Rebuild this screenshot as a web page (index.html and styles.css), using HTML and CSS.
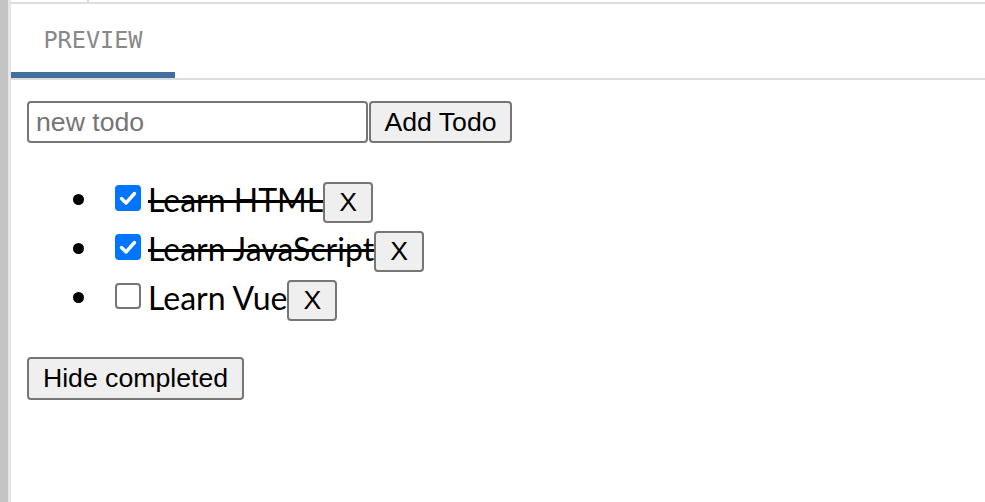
FILE: index.html
```html
<!DOCTYPE html>
<html lang="en">
<head>
<meta charset="utf-8">
<title>Preview</title>
<link rel="stylesheet" href="styles.css">
</head>
<body>
<div class="shell">
  <div class="gutter"></div>
  <div class="edge"></div>
  <main class="pane">
    <div class="topbar"><span class="topdivider"></span></div>
    <nav class="tabs"><div class="tab"><span class="tab-label">PREVIEW</span></div></nav>
    <section class="app">
      <form class="add-row">
        <input class="todo-input" type="text" placeholder="new todo">
        <button class="btn add-btn" type="button">Add Todo</button>
      </form>
      <ul class="todos">
        <li class="todo">
          <span class="check checked"><svg viewBox="0 0 26 26" width="26" height="26"><path d="M6.5 13.5l4.5 4.5 8.5-9.5" fill="none" stroke="#fff" stroke-width="3.4" stroke-linecap="round" stroke-linejoin="round"/></svg></span>
          <span class="label done">Learn HTML</span><button class="btn x-btn" type="button">X</button>
        </li>
        <li class="todo">
          <span class="check checked"><svg viewBox="0 0 26 26" width="26" height="26"><path d="M6.5 13.5l4.5 4.5 8.5-9.5" fill="none" stroke="#fff" stroke-width="3.4" stroke-linecap="round" stroke-linejoin="round"/></svg></span>
          <span class="label done">Learn JavaScript</span><button class="btn x-btn" type="button">X</button>
        </li>
        <li class="todo">
          <span class="check"></span>
          <span class="label">Learn Vue</span><button class="btn x-btn" type="button">X</button>
        </li>
      </ul>
      <button class="btn hide-btn" type="button">Hide completed</button>
    </section>
  </main>
</div>
</body>
</html>
```

FILE: styles.css
```css
html, body {
  margin: 0;
  padding: 0;
  background: #ffffff;
}

body {
  font-family: "Lato", "Segoe UI", sans-serif;
  color: #000;
  overflow: hidden;
}

.shell {
  display: flex;
  height: 502px;
}

.gutter {
  width: 8px;
  background: #c4c4c4;
}

.edge {
  width: 3px;
  background: #e6e6e6;
}

.pane {
  flex: 1;
  display: flex;
  flex-direction: column;
  min-width: 0;
}

.topbar {
  height: 2px;
  border-bottom: 2px solid #dddddd;
  display: flex;
}

.topdivider {
  width: 2px;
  height: 2px;
  margin-left: 76px;
  background: #dddddd;
}

.tabs {
  height: 74px;
  border-bottom: 2px solid #dddddd;
  display: flex;
}

.tab {
  width: 164px;
  box-sizing: border-box;
  border-bottom: 6px solid #41709e;
  display: flex;
  align-items: center;
  justify-content: center;
  padding-top: 3px;
}

.tab-label {
  font-family: "DejaVu Sans Mono", "Liberation Mono", monospace;
  font-size: 23.5px;
  color: #888888;
}

.app {
  padding: 21px 16px 0 16px;
}

.add-row {
  display: flex;
  margin: 0;
}

.todo-input {
  box-sizing: border-box;
  width: 341px;
  height: 42px;
  border: 2px solid #767676;
  border-radius: 4px;
  padding: 0 7px;
  font-family: "Liberation Sans", Arial, sans-serif;
  font-size: 26.67px;
  color: #000;
  background: #fff;
  outline: none;
}

.todo-input::placeholder {
  color: #757575;
}

.btn {
  box-sizing: border-box;
  border: 2px solid #767676;
  border-radius: 4px;
  background: #efefef;
  color: #000;
  font-family: "Liberation Sans", Arial, sans-serif;
  font-size: 26.67px;
  line-height: 1;
  white-space: nowrap;
  cursor: default;
}

.add-btn {
  height: 42px;
  width: 143px;
  margin-left: 1px;
  padding: 0;
}

.todos {
  list-style: none;
  margin: 30px 0 37px 0;
  padding: 0;
}

.todo {
  height: 49px;
  display: flex;
  align-items: center;
}

.todo::before {
  content: "";
  width: 11px;
  height: 11px;
  border-radius: 50%;
  background: #000;
  margin-left: 46px;
  margin-right: 23px;
  margin-top: 3px;
}

.check {
  box-sizing: border-box;
  width: 26px;
  height: 26px;
  margin-left: 8px;
  margin-right: 7px;
  border: 2px solid #767676;
  border-radius: 4px;
  background: #fff;
  display: flex;
}

.check svg {
  margin: -2px;
}

.check.checked {
  background: #0075ff;
  border-color: #0075ff;
}

.label {
  font-size: 32px;
  line-height: 1;
  margin-top: 4px;
}

.label.done {
  text-decoration: line-through;
  text-decoration-thickness: 3px;
}

.x-btn {
  width: 50px;
  height: 41px;
  padding: 0;
  margin-top: 9px;
}

.hide-btn {
  width: 217px;
  height: 43px;
  padding: 0;
}
```
